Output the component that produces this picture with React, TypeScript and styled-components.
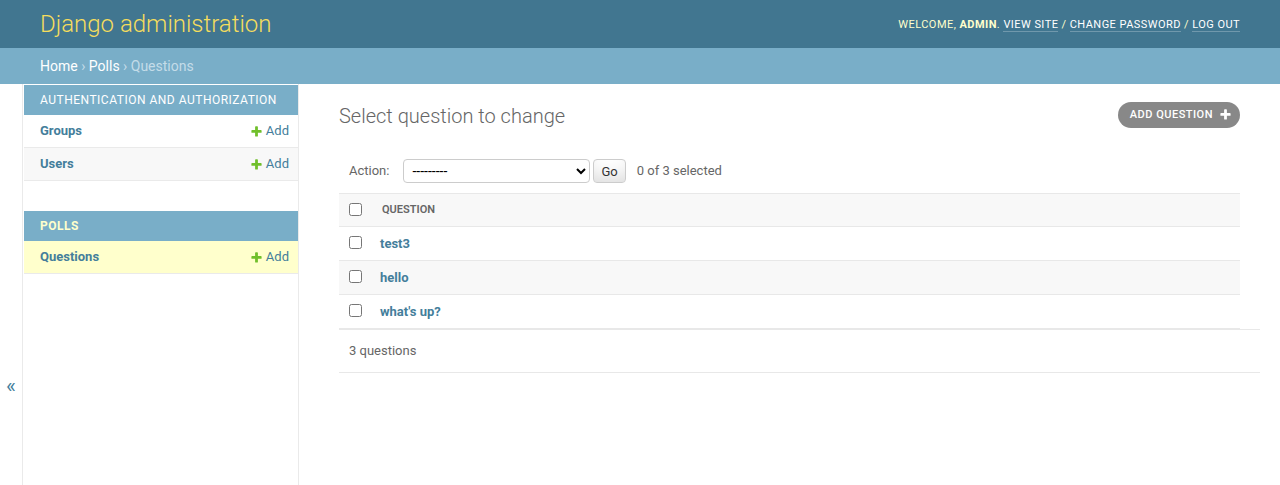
import React from 'react';
import styled, { createGlobalStyle } from 'styled-components';

const GlobalStyle = createGlobalStyle`
    html, body, #root {
        height: 100%;
    }
    body {
        margin: 0;
        font-family: Roboto, "Lucida Grande", "DejaVu Sans", sans-serif;
        font-size: 14px;
        color: #333;
        background: #fff;
    }
    * {
        box-sizing: border-box;
    }
`;

const Page = styled.div`
    min-height: 100vh;
    display: flex;
    flex-direction: column;
`;

const Header = styled.header`
    display: flex;
    justify-content: space-between;
    align-items: center;
    padding: 10px 40px;
    background: #417690;
`;

const Branding = styled.h1`
    margin: 0;
    font-size: 24px;
    line-height: 28px;
    font-weight: 300;
    color: #f5dd5d;
`;

const UserTools = styled.div`
    font-size: 11px;
    letter-spacing: 0.45px;
    text-transform: uppercase;
    color: #ffc;
    line-height: 16px;
    padding-top: 2px;

    strong {
        font-weight: 700;
    }
`;

const ToolLink = styled.a`
    color: #fff;
    text-decoration: none;
    border-bottom: 1px solid rgba(255, 255, 255, 0.25);
`;

const Breadcrumbs = styled.div`
    padding: 10px 40px;
    background: #79aec8;
    color: #c4dce8;
    font-size: 14px;
    line-height: 16px;
`;

const Crumb = styled.a`
    color: #fff;
    text-decoration: none;
`;

const Main = styled.div`
    flex: 1;
    display: flex;
`;

const Toggle = styled.button`
    flex: 0 0 23px;
    width: 23px;
    display: flex;
    justify-content: center;
    align-items: flex-start;
    padding: 292px 0 0 0;
    border: 0;
    border-right: 1px solid #eaeaea;
    background: #fff;
    color: #447e9b;
    font-family: inherit;
    font-size: 21px;
    line-height: 20px;
    cursor: pointer;
`;

const Sidebar = styled.nav`
    flex: 0 0 276px;
    border-right: 1px solid #eaeaea;
    padding: 1px 0 0 1px;
`;

const Module = styled.div`
    margin-bottom: 30px;
`;

const Caption = styled.div<{ $current?: boolean }>`
    padding: 8px 8px 8px 16px;
    background: #79aec8;
    color: ${p => (p.$current ? '#ffc' : '#fff')};
    font-weight: ${p => (p.$current ? 700 : 400)};
    font-size: 12px;
    line-height: 14px;
    letter-spacing: 0.5px;
    text-transform: uppercase;
`;

const ModelRow = styled.div<{ $shade?: 'white' | 'grey' | 'selected' }>`
    display: flex;
    justify-content: space-between;
    align-items: center;
    padding: 8px 9px 8px 16px;
    font-size: 13px;
    line-height: 16px;
    border-bottom: 1px solid #eaeaea;
    background: ${p =>
        p.$shade === 'selected' ? '#ffc' : p.$shade === 'grey' ? '#f8f8f8' : '#fff'};
`;

const ModelName = styled.a`
    color: #447e9b;
    font-weight: 700;
    text-decoration: none;
`;

const AddLink = styled.a`
    display: flex;
    align-items: center;
    gap: 3px;
    color: #447e9b;
    text-decoration: none;
`;

const Content = styled.main`
    flex: 1;
    padding: 20px 40px;
    min-width: 0;
`;

const TitleRow = styled.div`
    display: flex;
    justify-content: space-between;
    align-items: center;
    margin-bottom: 21px;
`;

const Title = styled.h1`
    margin: 0;
    font-size: 20px;
    line-height: 24px;
    font-weight: 300;
    color: #666;
`;

const ObjectTool = styled.a`
    display: flex;
    align-items: center;
    gap: 6px;
    margin-top: -3px;
    padding: 3px 8px 3px 12px;
    border-radius: 15px;
    background: #888;
    color: #fff;
    font-size: 11px;
    line-height: 20px;
    font-weight: 500;
    letter-spacing: 0.5px;
    text-transform: uppercase;
    text-decoration: none;
`;

const Actions = styled.div`
    display: flex;
    align-items: center;
    padding: 10px;
    margin-right: -20px;
    color: #666;
    font-size: 13px;
    line-height: 24px;
`;

const ActionSelect = styled.select`
    width: 187px;
    height: 24px;
    margin-left: 14px;
    padding: 0 0 0 4px;
    border: 1px solid #ccc;
    border-radius: 4px;
    background: #fff;
    color: #000;
    font-family: inherit;
    font-size: 14px;
`;

const GoButton = styled.button`
    height: 24px;
    margin-left: 3px;
    padding: 4px 7px;
    border: 1px solid #ccc;
    border-radius: 4px;
    background: #fff;
    box-shadow: 0 -15px 20px -10px rgba(0, 0, 0, 0.15) inset;
    color: #333;
    font-family: inherit;
    font-size: 13px;
    line-height: 1;
    cursor: pointer;
`;

const Counter = styled.span`
    margin-left: 11px;
`;

const Results = styled.table`
    width: 100%;
    border-collapse: collapse;
`;

const HeadCell = styled.th<{ $check?: boolean }>`
    width: ${p => (p.$check ? '33px' : 'auto')};
    padding: ${p => (p.$check ? '0' : '8px 10px')};
    text-align: ${p => (p.$check ? 'center' : 'left')};
    background: #f8f8f8;
    border-top: 1px solid #e8e8e8;
    border-bottom: 1px solid #e8e8e8;
    color: #666;
    font-size: 11px;
    line-height: 16px;
    font-weight: 600;
    text-transform: uppercase;
`;

const ResultRow = styled.tr<{ $alt?: boolean }>`
    background: ${p => (p.$alt ? '#f8f8f8' : '#fff')};
`;

const CheckCell = styled.td`
    width: 33px;
    padding: 0;
    text-align: center;
    border-bottom: 1px solid #e8e8e8;
    vertical-align: middle;
`;

const NameCell = styled.th`
    padding: 8px;
    text-align: left;
    font-size: 13px;
    line-height: 17px;
    font-weight: 700;
    border-bottom: 1px solid #e8e8e8;

    a {
        color: #447e9b;
        text-decoration: none;
    }
`;

const Check = styled.input.attrs({ type: 'checkbox' })`
    display: block;
    width: 13px;
    height: 13px;
    margin: -2px auto 0;
`;

const Paginator = styled.div`
    margin-right: -20px;
    padding: 10px;
    border-top: 1px solid #e8e8e8;
    border-bottom: 1px solid #e8e8e8;
    color: #666;
    font-size: 13px;
    line-height: 22px;
`;

const PlusIcon: React.FC<{ color: string; size: number }> = ({ color, size }) => (
    <svg width={size} height={size} viewBox="0 0 1792 1792" aria-hidden="true">
        <path
            fill={color}
            d="M1600 796v192q0 40-28 68t-68 28h-416v416q0 40-28 68t-68 28h-192q-40 0-68-28t-28-68v-416h-416q-40 0-68-28t-28-68v-192q0-40 28-68t68-28h416v-416q0-40 28-68t68-28h192q40 0 68 28t28 68v416h416q40 0 68 28t28 68z"
        />
    </svg>
);

const apps = [
    {
        name: 'Authentication and Authorization',
        current: false,
        models: ['Groups', 'Users'],
    },
    {
        name: 'Polls',
        current: true,
        models: ['Questions'],
    },
];

const questions = ['test3', 'hello', "what's up?"];

const App: React.FC = () => {
    return (
        <>
            <GlobalStyle />
            <Page>
                <Header>
                    <Branding>Django administration</Branding>
                    <UserTools>
                        Welcome, <strong>admin</strong>.{' '}
                        <ToolLink href="#">View site</ToolLink> /{' '}
                        <ToolLink href="#">Change password</ToolLink> /{' '}
                        <ToolLink href="#">Log out</ToolLink>
                    </UserTools>
                </Header>
                <Breadcrumbs>
                    <Crumb href="#">Home</Crumb> › <Crumb href="#">Polls</Crumb> › Questions
                </Breadcrumbs>
                <Main>
                    <Toggle aria-label="Toggle navigation">«</Toggle>
                    <Sidebar>
                        {apps.map(app => (
                            <Module key={app.name}>
                                <Caption $current={app.current}>{app.name}</Caption>
                                {app.models.map((model, i) => (
                                    <ModelRow
                                        key={model}
                                        $shade={app.current ? 'selected' : i % 2 ? 'grey' : 'white'}
                                    >
                                        <ModelName href="#">{model}</ModelName>
                                        <AddLink href="#">
                                            <PlusIcon color="#70bf2b" size={13} />
                                            Add
                                        </AddLink>
                                    </ModelRow>
                                ))}
                            </Module>
                        ))}
                    </Sidebar>
                    <Content>
                        <TitleRow>
                            <Title>Select question to change</Title>
                            <ObjectTool href="#">
                                Add question
                                <PlusIcon color="#fff" size={13} />
                            </ObjectTool>
                        </TitleRow>
                        <Actions>
                            <label>Action:</label>
                            <ActionSelect defaultValue="">
                                <option value="">---------</option>
                                <option value="delete_selected">Delete selected questions</option>
                            </ActionSelect>
                            <GoButton>Go</GoButton>
                            <Counter>0 of 3 selected</Counter>
                        </Actions>
                        <Results>
                            <thead>
                                <tr>
                                    <HeadCell $check>
                                        <Check />
                                    </HeadCell>
                                    <HeadCell>Question</HeadCell>
                                </tr>
                            </thead>
                            <tbody>
                                {questions.map((q, i) => (
                                    <ResultRow key={q} $alt={i % 2 === 1}>
                                        <CheckCell>
                                            <Check />
                                        </CheckCell>
                                        <NameCell>
                                            <a href="#">{q}</a>
                                        </NameCell>
                                    </ResultRow>
                                ))}
                            </tbody>
                        </Results>
                        <Paginator>3 questions</Paginator>
                    </Content>
                </Main>
            </Page>
        </>
    );
};

export default App;
